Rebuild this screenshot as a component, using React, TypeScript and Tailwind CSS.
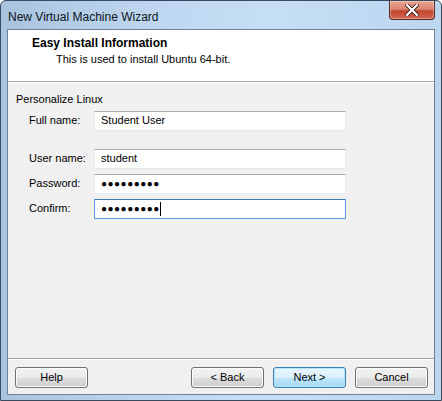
import React from 'react';

const font = { fontFamily: '"Liberation Sans", Arial, sans-serif' };

const Field = ({ label, value, dots, focused, className }: { label: string; value?: string; dots?: number; focused?: boolean; className?: string }) => (
  <div className={`flex items-center ${className ?? ''}`}>
    <div className="w-[78px] shrink-0 pl-[13px] text-[11px] text-black">{label}</div>
    <div
      className={`flex h-[20px] w-[252px] shrink-0 items-center bg-white pl-[6px] border ${
        focused ? 'border-[#569de5] border-t-[#3d7bad]' : 'border-[#e3e9ef] border-t-[#abadb3]'
      }`}
    >
      {value && <span className="text-[11px] text-black">{value}</span>}
      {dots && (
        <span className="text-[10px] leading-none tracking-[0.5px] text-black">{'●'.repeat(dots)}</span>
      )}
      {focused && <span className="h-[14px] w-[1px] bg-black" />}
    </div>
  </div>
);

const Btn = ({ label, primary }: { label: string; primary?: boolean }) => (
  <button
    className={`h-[21px] w-[73px] rounded-[3px] border text-[11px] text-black ${
      primary
        ? 'border-[#3c7fb1] bg-[linear-gradient(#eaf6fd_0%,#d9f0fc_50%,#bee6fd_51%,#a7d9f5_100%)] shadow-[inset_0_0_0_1px_#b6e4fb]'
        : 'border-[#707070] bg-[linear-gradient(#f2f2f2_0%,#ebebeb_50%,#dddddd_51%,#cfcfcf_100%)] shadow-[inset_0_0_0_1px_#fcfcfc]'
    }`}
  >
    {label}
  </button>
);

export default function App() {
  return (
    <div style={font} className="h-[401px] w-[442px] bg-white">
      <div className="flex h-full w-full flex-col rounded-t-[6px] border border-[#3a4b5e] bg-[linear-gradient(90deg,#a9c3de_0%,#bcd4ee_30%,#c6def5_60%,#bcd6f0_100%)] px-[6px] pb-[5px]">
        {/* title bar */}
        <div className="flex h-[28px] items-start">
          <div className="mt-[7px] ml-[1px] text-[12px] text-[#0c1620]">New Virtual Machine Wizard</div>
          <div className="ml-auto flex h-[19px] w-[46px] items-center justify-center rounded-b-[4px] border border-t-0 border-[#5a2a25] bg-[linear-gradient(#e8a493_0%,#d98672_45%,#c2452f_55%,#d0664e_100%)] shadow-[inset_0_0_0_1px_rgba(255,255,255,0.35)]">
            <svg width="14" height="12" viewBox="0 0 14 12">
              <path d="M2 1 L12 11 M12 1 L2 11" stroke="#3c1a16" strokeWidth="4" strokeLinecap="square" />
              <path d="M2 1 L12 11 M12 1 L2 11" stroke="#ffffff" strokeWidth="2.2" strokeLinecap="square" />
            </svg>
          </div>
        </div>

        {/* client */}
        <div className="flex flex-1 flex-col border border-[#6d8198] bg-[#f0f0f0]">
          <div className="h-[52px] border-b border-[#a0a0a0] bg-white pl-[24px] pt-[6px]">
            <div className="text-[12px] leading-[15px] font-bold text-black">Easy Install Information</div>
            <div className="pl-[24px] pt-[1px] text-[11px] leading-[15px] text-black">This is used to install Ubuntu 64-bit.</div>
          </div>
          <div className="h-px bg-white" />

          <div className="flex-1 pl-[8px] pt-[8px]">
            <div className="text-[11px] text-black">Personalize Linux</div>
            <Field className="mt-[3px]" label="Full name:" value="Student User" />
            <Field className="mt-[18px]" label="User name:" value="student" />
            <Field className="mt-[5px]" label="Password:" dots={9} />
            <Field className="mt-[5px]" label="Confirm:" dots={9} focused />
          </div>

          <div className="h-px bg-[#a0a0a0]" />
          <div className="h-px bg-white" />
          <div className="flex h-[34px] items-start pl-[7px] pr-[6px] pt-[7px]">
            <Btn label="Help" />
            <div className="ml-auto flex gap-[9px]">
              <Btn label="< Back" />
              <Btn label="Next >" primary />
              <Btn label="Cancel" />
            </div>
          </div>
        </div>
      </div>
    </div>
  );
}
